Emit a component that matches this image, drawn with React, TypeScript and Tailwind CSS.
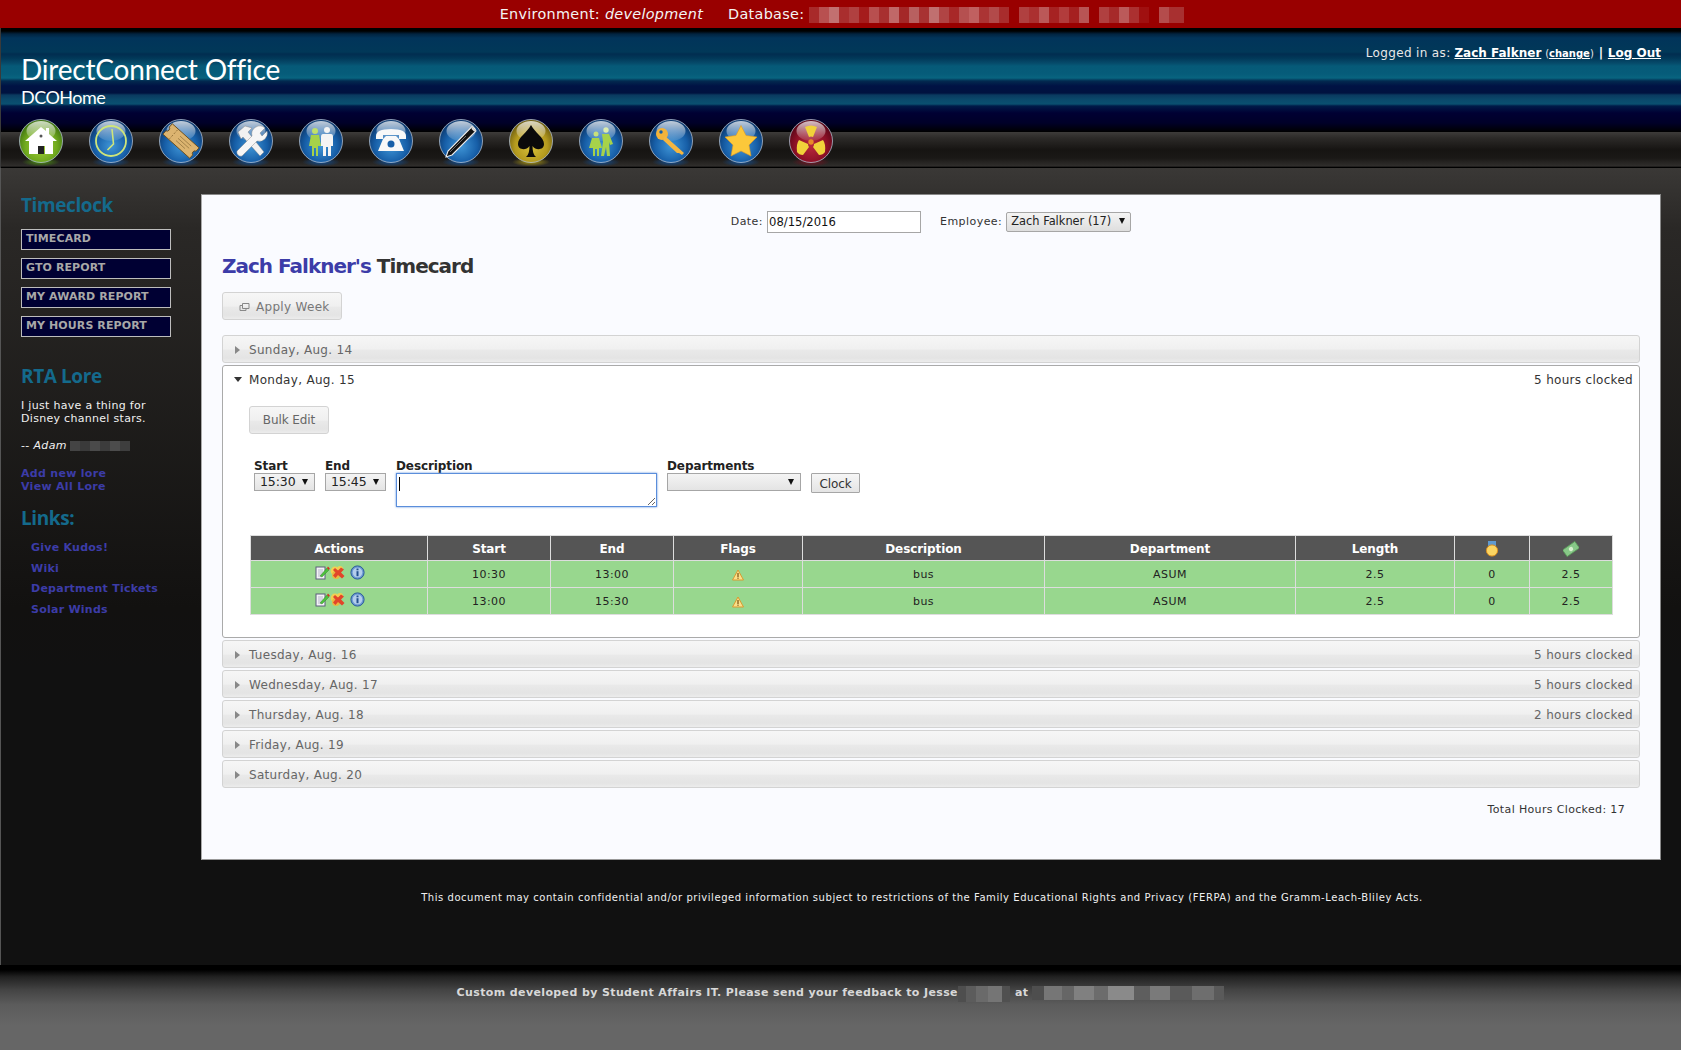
import React from "react";

const F = "[font-family:'DejaVu_Sans',Verdana,sans-serif]";

function Redact({ cells, h = "h-[14px]" }: { cells: [number, string][]; h?: string }) {
  return (
    <span className={`inline-flex align-middle ${h}`}>
      {cells.map(([w, c], i) => (
        <span key={i} className="block h-full" style={{ width: w, background: c }} />
      ))}
    </span>
  );
}

const orbs: Record<string, { a: string; b: string; c: string; glow: string }> = {
  blue: { a: "#3f95d6", b: "#175fa8", c: "#0c3a70", glow: "#0d4f9a" },
  green: { a: "#a6d23a", b: "#6fa81e", c: "#3f7410", glow: "#4f9a10" },
  gold: { a: "#d8c23c", b: "#b49a1e", c: "#6f5f10", glow: "#b5a010" },
  red: { a: "#b8283c", b: "#8c1026", c: "#5a0618", glow: "#7a1020" },
};

function Orb({ id, color, children }: { id: string; color: string; children: React.ReactNode }) {
  const o = orbs[color];
  return (
    <svg width="44" height="49" viewBox="0 0 44 49" className="block shrink-0">
      <defs>
        <radialGradient id={`s${id}`} cx="50%" cy="62%" r="58%">
          <stop offset="0%" stopColor={o.a} />
          <stop offset="65%" stopColor={o.b} />
          <stop offset="100%" stopColor={o.c} />
        </radialGradient>
        <linearGradient id={`h${id}`} x1="0" y1="0" x2="0" y2="1">
          <stop offset="0%" stopColor="#fff" stopOpacity="0.75" />
          <stop offset="100%" stopColor="#fff" stopOpacity="0.08" />
        </linearGradient>
        <radialGradient id={`g${id}`} cx="50%" cy="50%" r="50%">
          <stop offset="0%" stopColor={o.glow} stopOpacity="0.95" />
          <stop offset="100%" stopColor={o.glow} stopOpacity="0" />
        </radialGradient>
      </defs>
      <ellipse cx="22" cy="43" rx="19" ry="4.5" fill={`url(#g${id})`} />
      <circle cx="22" cy="22" r="21.5" fill={`url(#s${id})`} stroke="#b7c6d8" strokeOpacity="0.75" strokeWidth="1" />
      <ellipse cx="22" cy="12" rx="14.5" ry="10" fill={`url(#h${id})`} />
      {children}
    </svg>
  );
}

const navIcons = [
  <Orb key="0" id="a" color="green">
    <path d="M22 8 L27 12 V9 H30 V15 L38 22 H34 V35 H26 V27 H19 V35 H10 V22 H6 Z" fill="#fff" />
    <rect x="19" y="27" width="6" height="8" fill="#222" />
    <circle cx="22" cy="17" r="1.5" fill="#555" />
  </Orb>,
  <Orb key="1" id="b" color="blue">
    <circle cx="22" cy="22" r="15" fill="none" stroke="#cfe57a" strokeWidth="1.8" />
    <path d="M23 10 L24.5 25 L18.5 31" fill="none" stroke="#cfe57a" strokeWidth="1.6" />
  </Orb>,
  <Orb key="2" id="c" color="blue">
    <g transform="rotate(42 22 22)">
      <path d="M4 15 H40 V19.5 A2.6 2.6 0 0 0 40 24.5 V29 H4 V24.5 A2.6 2.6 0 0 0 4 19.5 Z" fill="#dcb470" stroke="#6a4e20" strokeWidth="0.9" />
      <path d="M12 16 V28" stroke="#8a6a32" strokeWidth="0.8" strokeDasharray="2 1.5" />
      <path d="M18 19 H33 M18 22 H33 M18 25 H30" stroke="#9a7a42" strokeWidth="0.8" />
    </g>
  </Orb>,
  <Orb key="3" id="d" color="blue">
    <path d="M9 13 L16 7 L23 9 L19 13 L35 33 L31 37 L14 18 L12 20 Z" fill="#f1f1f1" stroke="#777" strokeWidth="0.4" />
    <path d="M36 9 L31 14 L33 17 L38 12 A8 8 0 0 1 28 22 L13 37 A4 4 0 0 1 8 32 L23 17 A8 8 0 0 1 36 9 Z" fill="#f6f6f6" stroke="#777" strokeWidth="0.4" />
  </Orb>,
  <Orb key="4" id="e" color="blue">
    <circle cx="16" cy="12" r="3" fill="#c0e06a" />
    <path d="M12 16 H20 L22 27 H19 V37 H17 V29 H15 V37 H13 V27 H10 Z" fill="#a6d24a" />
    <circle cx="28" cy="11" r="3" fill="#f4f4f4" />
    <path d="M24 15 H32 Q34 15 34 18 V27 H32 V37 H29 V28 H27 V37 H24 V27 H22 V18 Q22 15 24 15 Z" fill="#f4f4f4" />
  </Orb>,
  <Orb key="5" id="f" color="blue">
    <path d="M7 17 Q7 10 22 10 Q37 10 37 17 V20 H30 V16 H14 V20 H7 Z" fill="#f8f8f8" />
    <path d="M14 20 L17 17 H27 L30 20 L35 32 H9 Z" fill="#f8f8f8" />
    <circle cx="22" cy="25" r="3.5" fill="#175fa8" />
  </Orb>,
  <Orb key="6" id="g" color="blue">
    <path d="M36 10 L33 7.5 L9 32 L7 38 L13 36 L37 12 Z" fill="#111" stroke="#eee" strokeWidth="1.1" />
    <path d="M33 9 L36 12" stroke="#ddd" strokeWidth="2" />
    <path d="M11 33 L27 17" stroke="#999" strokeWidth="0.7" />
  </Orb>,
  <Orb key="7" id="h" color="gold">
    <path d="M22 6 C26 14 35 18 35 25 C35 31 27 32 23.5 27 C23.5 32 24.5 36 27 38 H17 C19.5 36 20.5 32 20.5 27 C17 32 9 31 9 25 C9 18 18 14 22 6 Z" fill="#0a0a0a" />
  </Orb>,
  <Orb key="8" id="i" color="blue">
    <circle cx="27" cy="11" r="2.7" fill="#dcedb0" />
    <path d="M23 15 H30 L34 25 L31 26 L30 23 L31 37 H28 L27 28 L25 37 H22 L24 23 Z" fill="#a6d24a" />
    <circle cx="17" cy="15" r="2.5" fill="#c8e07a" />
    <path d="M13 19 H20 L23 29 H20 V37 H18 V30 H16 V37 H14 V29 H10 Z" fill="#a6d24a" />
  </Orb>,
  <Orb key="9" id="j" color="blue">
    <circle cx="13" cy="15" r="6" fill="#f3b33a" />
    <circle cx="12" cy="13" r="1.7" fill="#175fa8" />
    <path d="M16 17 L35 34 L33 36 L30 34 L28 34 L14 21 Z" fill="#f5b63f" />
  </Orb>,
  <Orb key="10" id="k" color="blue">
    <path d="M22 6.5 L27 16.5 L38 18 L30 26 L32 37 L22 32 L12 37 L14 26 L6 18 L17 16.5 Z" fill="#fcc83a" stroke="#e39a20" strokeWidth="0.6" />
  </Orb>,
  <Orb key="11" id="l" color="red">
    <path d="M16 8 Q22 5 28 8 L24 18 Q22 17 20 18 Z" fill="#f1d23a" />
    <path d="M8 33 Q7 25 10 21 L19 25 Q19 27 20 28 L14 36 Q10 36 8 33 Z" fill="#f1d23a" />
    <path d="M36 33 Q37 25 34 21 L25 25 Q25 27 24 28 L30 36 Q34 36 36 33 Z" fill="#f1d23a" />
    <circle cx="22" cy="23" r="2.7" fill="#e88a2a" />
  </Orb>,
];

const EditIcon = () => (
  <svg width="15" height="15" viewBox="0 0 15 15" className="block">
    <rect x="1" y="2" width="9" height="12" fill="#f3f3f6" stroke="#5c5c7c" strokeWidth="1" />
    <path d="M3 5 H8 M3 7 H8 M3 9 H7 M3 11 H7" stroke="#a4a4c0" strokeWidth="0.8" />
    <path d="M5 11 L12 3 L14 5 L7 12 Z" fill="#4cc03c" stroke="#2c7a20" strokeWidth="0.4" />
    <path d="M12 3 L13 1.5 L14.8 3.5 L14 5 Z" fill="#d83020" />
  </svg>
);
const DelIcon = () => (
  <svg width="16" height="15" viewBox="0 0 16 15" className="block">
    <circle cx="5" cy="6" r="4.4" fill="#f2cf52" />
    <circle cx="6" cy="10" r="4" fill="#e8b840" />
    <circle cx="10" cy="4" r="3" fill="#f2cf52" />
    <path d="M5 3 L8 5.5 L11 2.5 L14 4.5 L11 7.5 L14.5 11 L12 13.5 L8 10 L5.5 13 L3 10.5 L5.5 7.5 L3 5 Z" fill="#e2452a" />
  </svg>
);
const InfoIcon = () => (
  <svg width="15" height="15" viewBox="0 0 15 15" className="block">
    <circle cx="7.5" cy="7.5" r="6.6" fill="#6d9ad2" stroke="#2c5a9c" strokeWidth="1" />
    <circle cx="7.5" cy="7.5" r="4.8" fill="#b4cdec" />
    <rect x="6.5" y="6.2" width="2" height="5" fill="#23508e" />
    <rect x="6.5" y="3.5" width="2" height="1.8" fill="#23508e" />
  </svg>
);
const WarnIcon = () => (
  <svg width="12" height="12" viewBox="0 0 12 12" className="mx-auto block">
    <path d="M6 1 L11.5 11 H0.5 Z" fill="#fbe08a" stroke="#d99a30" strokeWidth="1" strokeLinejoin="round" />
    <rect x="5.4" y="4" width="1.2" height="4" fill="#7a5010" />
    <rect x="5.4" y="8.6" width="1.2" height="1.2" fill="#7a5010" />
  </svg>
);
const MedalIcon = () => (
  <svg width="14" height="16" viewBox="0 0 14 16" className="mx-auto block">
    <rect x="3" y="0" width="8" height="5" fill="#5f9ad0" />
    <circle cx="7" cy="9.5" r="5.6" fill="#fbd562" stroke="#dc8f1c" strokeWidth="1" />
  </svg>
);
const MoneyIcon = () => (
  <svg width="16" height="16" viewBox="0 0 16 16" className="mx-auto block">
    <g transform="rotate(-35 8 8)">
      <rect x="0.5" y="4" width="15" height="8" fill="#88c888" stroke="#5a9a5a" strokeWidth="0.8" />
      <circle cx="8" cy="8" r="2.2" fill="#d8f0d0" />
    </g>
  </svg>
);

function Caret({ open }: { open?: boolean }) {
  return open ? (
    <svg width="8" height="5" viewBox="0 0 8 5" className="block">
      <path d="M0 0 H8 L4 5 Z" fill="#333" />
    </svg>
  ) : (
    <svg width="5" height="8" viewBox="0 0 5 8" className="block">
      <path d="M0 0 L5 4 L0 8 Z" fill="#888" />
    </svg>
  );
}

function Sel({ value, w }: { value: string; w: string }) {
  return (
    <span className={`relative block h-[18px] ${w}`}>
      <select
        defaultValue={value}
        className={`block h-full w-full appearance-none rounded-none border border-[#a6a6a6] bg-[linear-gradient(#f4f4f4,#e4e4e4)] pl-[5px] text-[12.5px] leading-4 text-[#222] ${F}`}
      >
        <option>{value}</option>
      </select>
      <span className="absolute right-[7px] top-[6px] h-0 w-0 border-x-[3.5px] border-t-[6px] border-x-transparent border-t-[#111]" />
    </span>
  );
}

const collapsedBg =
  "bg-[linear-gradient(#f6f6f6_0%,#f0f0f0_50%,#e9e9e9_55%,#e4e4e4_85%,#ececec_100%)]";

function DayRow({ label, hours }: { label: string; hours?: string }) {
  return (
    <div className={`flex h-7 items-center rounded-[3px] border border-[#d3d3d3] ${collapsedBg} pl-[12px] pr-[6px] pt-[1px] text-[12px] tracking-[0.3px] text-[#666]`}>
      <Caret />
      <span className="ml-[9px]">{label}</span>
      {hours && <span className="ml-auto">{hours}</span>}
    </div>
  );
}

const rows = [
  ["10:30", "13:00"],
  ["13:00", "15:30"],
];

const headers: [string, string][] = [
  ["Actions", "w-[177px]"],
  ["Start", "w-[123px]"],
  ["End", "w-[123px]"],
  ["Flags", "w-[129px]"],
  ["Description", "w-[242px]"],
  ["Department", "w-[251px]"],
  ["Length", "w-[159px]"],
  ["", "w-[75px]"],
  ["", "w-[83px]"],
];

const dbColors = ["#a82a2a", "#b85050", "#c27070", "#a92e2e", "#b04040", "#a51c1c", "#b84f4f", "#a83030", "#c06868", "#a42828", "#b86060", "#a83232", "#c07070", "#b04444", "#a82828", "#b55050", "#c06060", "#ab3434", "#b24a4a", "#a82c2c", "#990000", "#b04040", "#ab3030", "#bb5858", "#a62222", "#b23c3c", "#a52020", "#b85454", "#990000", "#b04040", "#a62a2a", "#bb5a5a", "#ab3030", "#a01010", "#990000", "#b44c4c", "#a83030"];
const dbCells: [number, string][] = dbColors.map((c, i) => [i === dbColors.length - 1 ? 15 : 10, c] as [number, string]);

const td = "border border-[#ddd] p-0 pt-[2px]";

export default function App() {
  return (
    <div className={`min-h-[1050px] bg-[#111] ${F} text-[11px] text-white`}>
      {/* environment bar */}
      <div className="flex h-7 items-center justify-center bg-[#990000] pl-[3px] pt-[1px] text-[14.4px] tracking-[0.3px] text-[#f4f4f4]">
        <span>
          Environment: <em>development</em>
        </span>
        <span className="ml-[25px]">Database:</span>
        <span className="ml-[5px]">
          <Redact h="h-[16px]" cells={dbCells} />
        </span>
      </div>

      {/* masthead and nav */}
      <div className="flex h-[140px] flex-col border-l border-[#3a3a3a] bg-[linear-gradient(#000_0px,#000_3px,#01233f_6px,#01345a_10px,#013858_24px,#012d50_26px,#013858_30px,#064a6a_35px,#065a78_38px,#065c7a_46px,#086480_50px,#02294f_53px,#001244_58px,#00123f_65px,#0a3a60_67px,#0a4a6c_72px,#0a5070_76px,#001a48_78px,#000033_85px,#000028_95px,#000_104px,#3c3a38_104.5px,#2c2a28_110px,#161412_122px,#1a1816_130px,#302e2c_138px,#000_139.5px)]">
        <div className="flex h-[91px] items-start justify-between pl-[20px] pr-[20px]">
          <div className="pt-[24px]">
            <div className="text-[28px] leading-[34px] tracking-[-0.2px] text-white [font-family:'Lato',sans-serif]">DirectConnect Office</div>
            <div className="text-[18px] leading-[22px] tracking-[-0.5px] text-white [font-family:'Lato',sans-serif]">DCOHome</div>
          </div>
          <div className="pt-[17px] text-[12px] leading-4 text-[#e8e8e8]">
            <span className="tracking-[0.35px]">Logged in as:</span> <a className="font-bold text-white underline">Zach Falkner</a>{" "}
            <span className="text-[10px]">
              (<a className="font-bold text-white underline">change</a>)
            </span>{" "}
            <span className="mx-[1px] font-bold text-white">|</span>{" "}
            <a className="font-bold text-white underline">Log Out</a>
          </div>
        </div>
        <nav className="flex gap-[26px] pl-[18px]">{navIcons}</nav>
      </div>

      {/* main */}
      <div className="flex min-h-[797px] border-l border-[#555] bg-[linear-gradient(#3a3836_0px,#2a2826_60px,#121110_440px,#111_500px)]">
        <aside className="w-[200px] shrink-0 pl-[20px] pr-[30px] pt-[25px]">
          <h2 className="text-[19px] font-bold leading-6 tracking-[-0.4px] text-[#146a8c] [font-family:'Open_Sans',sans-serif]">Timeclock</h2>
          <div className="mt-[12px] flex flex-col gap-[8px]">
            {["TIMECARD", "GTO REPORT", "MY AWARD REPORT", "MY HOURS REPORT"].map((t) => (
              <a key={t} className="flex h-[21px] items-center border border-[#bdbdbd] bg-[#000033] pl-[4px] text-[11px] font-bold tracking-[0.1px] text-[#a8a8a8]">
                {t}
              </a>
            ))}
          </div>
          <h2 className="mt-[27px] text-[19px] font-bold leading-6 tracking-[-0.4px] text-[#146a8c] [font-family:'Open_Sans',sans-serif]">RTA Lore</h2>
          <p className="mt-[11px] text-[11px] leading-[13px] tracking-[0.3px] text-[#f0f0f0]">
            I just have a thing for
            <br />
            Disney channel stars.
          </p>
          <p className="mt-[14px] flex items-center text-[11px] leading-[13px] tracking-[0.3px] text-[#f0f0f0]">
            -- <em className="ml-[4px]">Adam</em>
            <span className="ml-[3px]">
              <Redact h="h-[10px]" cells={[[10, "#444"], [10, "#3a3a3a"], [10, "#4a4a4a"], [10, "#3c3c3c"], [10, "#4c4c4c"], [10, "#3e3e3e"]]} />
            </span>
          </p>
          <div className="mt-[15px] text-[11px] font-bold leading-[13px] tracking-[0.3px] text-[#3c3ca8]">
            <a className="block">Add new lore</a>
            <a className="block">View All Lore</a>
          </div>
          <h2 className="mt-[13px] text-[19px] font-bold leading-6 tracking-[-0.4px] text-[#146a8c] [font-family:'Open_Sans',sans-serif]">Links:</h2>
          <div className="mt-[11px] flex flex-col gap-[7px] pl-[10px] text-[11px] font-bold leading-[13.5px] tracking-[0.25px] text-[#3c3ca8]">
            <a>Give Kudos!</a>
            <a>Wiki</a>
            <a>Department Tickets</a>
            <a>Solar Winds</a>
          </div>
        </aside>

        <div className="w-[1460px] shrink-0 pt-[26px]">
          <main className="h-[666px] border-b border-l border-r border-t border-b-[#999] border-l-[#aaa] border-r-[#888] border-t-[#888] bg-[#fafbff] pl-[20px] pr-[20px] text-[#222]">
            <div className="flex h-[52px] items-center justify-center pt-[2px] text-[11px] tracking-[0.45px] text-[#333]">
              <label>Date:</label>
              <input
                defaultValue="08/15/2016"
                className="ml-[4px] h-[22px] w-[154px] border border-[#a6a6a6] bg-white pl-[1px] text-[11.6px] tracking-normal text-[#111]"
              />
              <label className="ml-[19px]">Employee:</label>
              <span className="relative ml-[4px] block h-[20px] w-[125px]">
                <select className="block h-full w-full appearance-none rounded-[2px] border border-[#a6a6a6] bg-[linear-gradient(#f4f4f4,#dedede)] pl-[4px] text-[11.4px] tracking-normal text-[#222]">
                  <option>Zach Falkner (17)</option>
                </select>
                <span className="absolute right-[6px] top-[6px] h-0 w-0 border-x-[3.5px] border-t-[6px] border-x-transparent border-t-[#111]" />
              </span>
            </div>
            <h1 className="mt-[7px] text-[20px] font-bold leading-6 tracking-[-1px] text-[#333]">
              <span className="text-[#3c3ca8]">Zach Falkner's</span> Timecard
            </h1>
            <button className={`mt-[14px] flex h-[28px] w-[120px] items-center rounded-[3px] border border-[#d3d3d3] ${collapsedBg} pl-[16px] pt-[1px] text-[12px] tracking-[0.3px] text-[#777]`}>
              <svg width="11" height="10" viewBox="0 0 11 10" className="mr-[6px]">
                <path d="M3.5 1.5 H10 V6.5 H3.5 Z M3.5 3.5 H1 V8.5 H7 V6.5" fill="none" stroke="#888" strokeWidth="1" />
              </svg>
              Apply Week
            </button>

            <div className="mt-[15px] flex flex-col gap-[2px]">
              <DayRow label="Sunday, Aug. 14" />
              <section className="h-[273px] rounded-[3px] border border-[#aaa] bg-white">
                <div className="flex h-[26px] items-center pl-[11px] pr-[6px] pt-[1px] text-[12px] tracking-[0.3px] text-[#333]">
                  <Caret open />
                  <span className="ml-[7px]">Monday, Aug. 15</span>
                  <span className="ml-auto">5 hours clocked</span>
                </div>
                <button className={`ml-[26px] mt-[14px] h-[28px] w-[80px] rounded-[3px] border border-[#d3d3d3] ${collapsedBg} text-[12px] tracking-[-0.1px] text-[#666]`}>
                  Bulk Edit
                </button>
                <div className="ml-[31px] mt-[25px] flex items-start text-[12px] leading-[14px] tracking-[-0.1px] text-[#222]">
                  <div className="w-[71px]">
                    <div className="font-bold">Start</div>
                    <Sel value="15:30" w="w-[61px]" />
                  </div>
                  <div className="w-[71px]">
                    <div className="font-bold">End</div>
                    <Sel value="15:45" w="w-[61px]" />
                  </div>
                  <div className="w-[271px]">
                    <div className="font-bold">Description</div>
                    <div className="relative w-[261px]">
                      <textarea className="block h-[34px] w-full border border-[#5b8edb] bg-white shadow-[0_0_2px_#5b8edb] outline-none" />
                      <span className="absolute left-[3px] top-[4px] h-[14px] w-px bg-black" />
                    </div>
                  </div>
                  <div className="w-[144px]">
                    <div className="font-bold">Departments</div>
                    <Sel value="" w="w-[134px]" />
                  </div>
                  <button className="mt-[14px] h-[20px] w-[49px] rounded-[1px] border border-[#a6a6a6] bg-[linear-gradient(#f6f6f6,#e4e4e4)] pt-[1px] text-[12px] text-[#333]">Clock</button>
                </div>
                <table className="ml-[27px] mt-[28px] table-fixed border-collapse text-center text-[11px] tracking-[0.45px] text-[#222]">
                  <thead>
                    <tr className="h-[25px] bg-[#555] text-[12px] tracking-[-0.1px] text-white">
                      {headers.map(([h, w], i) => (
                        <th key={i} className={`${w} border border-[#ddd] p-0 pt-[1px] font-bold`}>
                          {i === 7 && <MedalIcon />}
                          {i === 8 && <MoneyIcon />}
                          {h}
                        </th>
                      ))}
                    </tr>
                  </thead>
                  <tbody>
                    {rows.map(([s, e], i) => (
                      <tr key={i} className="h-[27px] bg-[#98d78e]">
                        <td className={td}>
                          <span className="inline-flex items-center pl-[2px]">
                            <EditIcon />
                            <DelIcon />
                            <span className="ml-[4px] flex"><InfoIcon /></span>
                          </span>
                        </td>
                        <td className={td}>{s}</td>
                        <td className={td}>{e}</td>
                        <td className={td}><WarnIcon /></td>
                        <td className={td}>bus</td>
                        <td className={td}>ASUM</td>
                        <td className={td}>2.5</td>
                        <td className={td}>0</td>
                        <td className={td}>2.5</td>
                      </tr>
                    ))}
                  </tbody>
                </table>
              </section>
              <DayRow label="Tuesday, Aug. 16" hours="5 hours clocked" />
              <DayRow label="Wednesday, Aug. 17" hours="5 hours clocked" />
              <DayRow label="Thursday, Aug. 18" hours="2 hours clocked" />
              <DayRow label="Friday, Aug. 19" />
              <DayRow label="Saturday, Aug. 20" />
            </div>
            <div className="mt-[14px] pr-[15px] text-right text-[11px] tracking-[0.35px] text-[#333]">Total Hours Clocked: 17</div>
          </main>
          <p className="mt-[31px] pr-[18px] text-center text-[10px] leading-[13px] tracking-[0.55px] text-[#f0f0f0]">
            This document may contain confidential and/or privileged information subject to restrictions of the Family Educational Rights and Privacy (FERPA) and the Gramm-Leach-Bliley Acts.
          </p>
        </div>
      </div>

      {/* footer */}
      <footer className="flex h-[85px] justify-center bg-[linear-gradient(#000_0px,#000_5px,#222_12px,#444_25px,#5c5c5c_40px,#666_60px)] pt-[21px] text-[11px] font-bold leading-[14px] tracking-[0.38px] text-[#d8d8d8]">
        <span>Custom developed by Student Affairs IT. Please send your feedback to Jesse</span>
        <Redact h="h-[16px]" cells={[[8, "#4e4e4e"], [10, "#5c5c5c"], [12, "#6a6a6a"], [14, "#757575"], [8, "#505050"]]} />
        <span className="ml-[5px]">at</span>
        <span className="ml-[4px]">
          <Redact h="h-[14px]" cells={[[12, "#4e4e4e"], [18, "#767676"], [12, "#666"], [20, "#808080"], [14, "#6c6c6c"], [26, "#8a8a8a"], [16, "#5e5e5e"], [20, "#7a7a7a"], [22, "#5a5a5a"], [22, "#6e6e6e"], [10, "#5a5a5a"]]} />
        </span>
      </footer>
    </div>
  );
}
